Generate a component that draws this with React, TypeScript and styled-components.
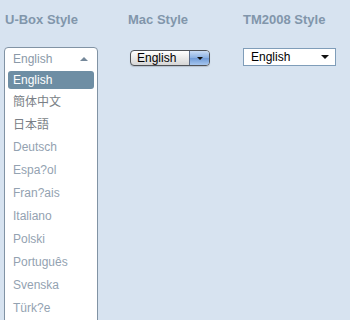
import React from 'react';
import styled, { createGlobalStyle } from 'styled-components';

const GlobalStyle = createGlobalStyle`
  html, body {
    margin: 0;
    padding: 0;
    background: #d7e3f0;
    font-family: 'Liberation Sans', Arial, sans-serif;
  }
`;

const Page = styled.div`
  display: grid;
  grid-template-columns: 124px 115px 1fr;
  grid-template-rows: auto auto;
  align-items: start;
  padding: 12px 0 0 4px;
  height: 320px;
  box-sizing: border-box;
  overflow: hidden;
`;

const Heading = styled.h3<{ $indent?: number }>`
  margin: 0 0 20px ${p => p.$indent ?? 0}px;
  font-size: 13px;
  line-height: 15px;
  font-weight: bold;
  color: #8196ab;
`;

const Column = styled.div<{ $top?: number; $indent?: number }>`
  margin-top: ${p => p.$top ?? 0}px;
  margin-left: ${p => p.$indent ?? 0}px;
`;

/* U-Box */
const UBox = styled.div`
  width: 94px;
  box-sizing: border-box;
  border: 1px solid #8193a4;
  border-radius: 4px;
  background: #fff;
  padding: 0 3px 20px;
`;

const UHeader = styled.div`
  height: 21px;
  display: flex;
  align-items: center;
  justify-content: space-between;
  padding: 0 6px 0 5px;
  font-size: 12px;
  color: #8a99a8;
`;

const UpArrow = styled.span`
  width: 0;
  height: 0;
  border-left: 4px solid transparent;
  border-right: 4px solid transparent;
  border-bottom: 4px solid #75889a;
`;

const Item = styled.div<{ $selected?: boolean; $cjk?: boolean }>`
  height: ${p => (p.$selected ? '18px' : '23px')};
  margin-top: ${p => (p.$selected ? '2px' : '0')};
  display: flex;
  align-items: center;
  padding: 0 5px;
  border-radius: 3px;
  font-size: 12px;
  background: ${p => (p.$selected ? '#6e8ea4' : 'transparent')};
  color: ${p => (p.$selected ? '#fff' : p.$cjk ? '#7a7f86' : '#93a2b1')};
  font-family: 'Liberation Sans', 'Noto Sans CJK JP', Arial, sans-serif;
`;

/* Mac */
const MacBox = styled.div`
  width: 80px;
  height: 16px;
  box-sizing: border-box;
  display: flex;
  border: 1px solid #4f5257;
  border-radius: 4px;
  overflow: hidden;
  background: linear-gradient(#ffffff, #e6e6e6 60%, #d6d6d6);
  box-shadow: 0 1px 1px rgba(0, 0, 0, 0.15);
`;

const MacText = styled.span`
  flex: 1;
  font-size: 12px;
  line-height: 14px;
  padding-left: 6px;
  color: #000;
`;

const MacButton = styled.span`
  width: 19px;
  display: flex;
  align-items: center;
  justify-content: center;
  border-left: 1px solid #5a6b88;
  background: linear-gradient(#c9dcf4, #8ab0e2 50%, #6f9ad6 51%, #a6c6ee);
`;

const DownArrow = styled.span<{ $size?: number }>`
  width: 0;
  height: 0;
  border-left: ${p => p.$size ?? 3}px solid transparent;
  border-right: ${p => p.$size ?? 3}px solid transparent;
  border-top: ${p => p.$size ?? 3}px solid #111;
`;

/* TM2008 */
const TmBox = styled.div`
  width: 93px;
  height: 18px;
  box-sizing: border-box;
  display: flex;
  align-items: center;
  justify-content: space-between;
  border: 1px solid #7f9db9;
  background: #fff;
  padding: 0 6px 0 7px;
  font-size: 12px;
  color: #000;
`;

const languages = [
  { name: '簡体中文', cjk: true },
  { name: '日本語', cjk: true },
  { name: 'Deutsch' },
  { name: 'Espa?ol' },
  { name: 'Fran?ais' },
  { name: 'Italiano' },
  { name: 'Polski' },
  { name: 'Português' },
  { name: 'Svenska' },
  { name: 'Türk?e' },
];

export default function App() {
  return (
    <>
      <GlobalStyle />
      <Page>
        <Heading $indent={1}>U-Box Style</Heading>
        <Heading>Mac Style</Heading>
        <Heading>TM2008 Style</Heading>

        <Column>
          <UBox>
            <UHeader>
              English
              <UpArrow />
            </UHeader>
            <Item $selected>English</Item>
            {languages.map(l => (
              <Item key={l.name} $cjk={l.cjk}>{l.name}</Item>
            ))}
          </UBox>
        </Column>

        <Column $top={3} $indent={2}>
          <MacBox>
            <MacText>English</MacText>
            <MacButton>
              <DownArrow />
            </MacButton>
          </MacBox>
        </Column>

        <Column $top={1}>
          <TmBox>
            English
            <DownArrow $size={4} />
          </TmBox>
        </Column>
      </Page>
    </>
  );
}
